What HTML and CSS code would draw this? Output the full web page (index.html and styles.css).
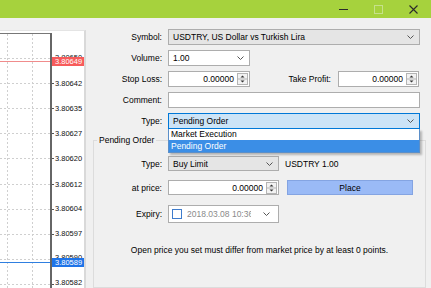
FILE: index.html
```html
<!DOCTYPE html>
<html lang="en">
<head>
  <meta charset="UTF-8" />
  <title>Order</title>
  <link rel="stylesheet" href="styles.css">
</head>
<body>
  <div class="window">
    <div class="titlebar">
      <div class="tb-btn">
        <svg width="9" height="9" viewBox="0 0 9 9"><line x1="0" y1="4.5" x2="9" y2="4.5" stroke="#2b2b2b"/></svg>
      </div>
      <div class="tb-btn">
        <svg width="9" height="9" viewBox="0 0 9 9"><rect x="0.5" y="0.5" width="8" height="8" fill="none" stroke="#c6e18a"/></svg>
      </div>
      <div class="tb-btn">
        <svg width="9" height="9" viewBox="0 0 9 9"><path d="M0.5 0.5 L8.5 8.5 M8.5 0.5 L0.5 8.5" stroke="#2b2b2b" stroke-width="1.1"/></svg>
      </div>
    </div>

    <div class="main">
      <div class="chart">
        <svg width="84" height="257" viewBox="0 0 84 257">
          <g stroke="#cfcfcf" stroke-dasharray="2 2">
            <line x1="7.5" y1="3" x2="7.5" y2="257"/>
            <line x1="32.5" y1="3" x2="32.5" y2="257"/>
            <line x1="0" y1="27.5" x2="50" y2="27.5"/>
            <line x1="0" y1="52.5" x2="50" y2="52.5"/>
            <line x1="0" y1="77.5" x2="50" y2="77.5"/>
            <line x1="0" y1="102.5" x2="50" y2="102.5"/>
            <line x1="0" y1="127.5" x2="50" y2="127.5"/>
            <line x1="0" y1="153.5" x2="50" y2="153.5"/>
            <line x1="0" y1="178.5" x2="50" y2="178.5"/>
            <line x1="0" y1="203.5" x2="50" y2="203.5"/>
            <line x1="0" y1="228.5" x2="50" y2="228.5"/>
            <line x1="0" y1="253.5" x2="50" y2="253.5"/>
          </g>
          <g stroke="#555">
            <line x1="52" y1="27.5" x2="54" y2="27.5"/>
            <line x1="52" y1="52.5" x2="54" y2="52.5"/>
            <line x1="52" y1="77.5" x2="54" y2="77.5"/>
            <line x1="52" y1="102.5" x2="54" y2="102.5"/>
            <line x1="52" y1="127.5" x2="54" y2="127.5"/>
            <line x1="52" y1="153.5" x2="54" y2="153.5"/>
            <line x1="52" y1="178.5" x2="54" y2="178.5"/>
            <line x1="52" y1="203.5" x2="54" y2="203.5"/>
            <line x1="52" y1="253.5" x2="54" y2="253.5"/>
          </g>
          <line x1="0" y1="30.5" x2="50" y2="30.5" stroke="#f08c8c"/>
          <line x1="0" y1="231.5" x2="50" y2="231.5" stroke="#2f7fe0"/>
          <line x1="0" y1="2.5" x2="51" y2="2.5" stroke="#777"/>
          <line x1="51" y1="2" x2="51" y2="257" stroke="#666" stroke-width="2"/>

          <g class="axis">
            <text x="55" y="29">3.80650</text>
            <text x="55" y="54.7">3.80642</text>
            <text x="55" y="79.7">3.80635</text>
            <text x="55" y="104.7">3.80627</text>
            <text x="55" y="129.7">3.80620</text>
            <text x="55" y="155.7">3.80612</text>
            <text x="55" y="180.2">3.80604</text>
            <text x="55" y="204.7">3.80597</text>
            <text x="55" y="229">3.80590</text>
            <text x="55" y="254.2">3.80582</text>
          </g>
          <rect x="52" y="26" width="32" height="9" fill="#f75b5b"/>
          <text class="axis-tag" x="55" y="33.2">3.80649</text>
          <rect x="52" y="227" width="32" height="9" fill="#1f74e8"/>
          <text class="axis-tag" x="55" y="234.2">3.80589</text>
        </svg>
      </div>

      <div class="form">
        <div class="row">
          <span class="lbl">Symbol:</span>
          <div class="select sel-gray w-full">
            <span>USDTRY, US Dollar vs Turkish Lira</span>
            <svg class="chev" width="7" height="4" viewBox="0 0 7 4"><path d="M0.5 0.5 L3.5 3.5 L6.5 0.5" fill="none" stroke="#555"/></svg>
          </div>
        </div>

        <div class="row">
          <span class="lbl">Volume:</span>
          <div class="select sel-white w-small">
            <span>1.00</span>
            <svg class="chev" width="7" height="4" viewBox="0 0 7 4"><path d="M0.5 0.5 L3.5 3.5 L6.5 0.5" fill="none" stroke="#555"/></svg>
          </div>
        </div>

        <div class="row">
          <span class="lbl">Stop Loss:</span>
          <div class="input w-small">
            <span class="val">0.00000</span>
            <svg class="spin" width="11" height="12" viewBox="0 0 11 12"><rect x="0.5" y="0.5" width="10" height="11" fill="#f2f2f2" stroke="#b4b4b4"/><line x1="1" y1="6" x2="10" y2="6" stroke="#b4b4b4"/><path d="M3.5 4.5 L5.5 2.5 L7.5 4.5Z" fill="#333"/><path d="M3.5 7.5 L5.5 9.5 L7.5 7.5Z" fill="#333"/></svg>
          </div>
          <span class="lbl-tp">Take Profit:</span>
          <div class="input w-tp">
            <span class="val">0.00000</span>
            <svg class="spin" width="11" height="12" viewBox="0 0 11 12"><rect x="0.5" y="0.5" width="10" height="11" fill="#f2f2f2" stroke="#b4b4b4"/><line x1="1" y1="6" x2="10" y2="6" stroke="#b4b4b4"/><path d="M3.5 4.5 L5.5 2.5 L7.5 4.5Z" fill="#333"/><path d="M3.5 7.5 L5.5 9.5 L7.5 7.5Z" fill="#333"/></svg>
          </div>
        </div>

        <div class="row">
          <span class="lbl">Comment:</span>
          <div class="input w-full"></div>
        </div>

        <div class="row last">
          <span class="lbl">Type:</span>
          <div class="type-wrap w-full">
            <div class="select sel-focus">
              <span>Pending Order</span>
              <svg class="chev" width="7" height="4" viewBox="0 0 7 4"><path d="M0.5 0.5 L3.5 3.5 L6.5 0.5" fill="none" stroke="#555"/></svg>
            </div>
            <ul class="dropdown">
              <li>Market Execution</li>
              <li class="picked">Pending Order</li>
            </ul>
          </div>
        </div>

        <fieldset class="group">
          <legend>Pending Order</legend>

          <div class="grow g1">
            <span class="glbl">Type:</span>
            <div class="select sel-gray w-mid">
              <span>Buy Limit</span>
              <svg class="chev" width="7" height="4" viewBox="0 0 7 4"><path d="M0.5 0.5 L3.5 3.5 L6.5 0.5" fill="none" stroke="#555"/></svg>
            </div>
            <span class="info">USDTRY 1.00</span>
          </div>

          <div class="grow g2">
            <span class="glbl">at price:</span>
            <div class="input w-mid">
              <span class="val">0.00000</span>
              <svg class="spin" width="11" height="12" viewBox="0 0 11 12"><rect x="0.5" y="0.5" width="10" height="11" fill="#f2f2f2" stroke="#b4b4b4"/><line x1="1" y1="6" x2="10" y2="6" stroke="#b4b4b4"/><path d="M3.5 4.5 L5.5 2.5 L7.5 4.5Z" fill="#333"/><path d="M3.5 7.5 L5.5 9.5 L7.5 7.5Z" fill="#333"/></svg>
            </div>
            <button class="place">Place</button>
          </div>

          <div class="grow g3">
            <span class="glbl">Expiry:</span>
            <div class="date w-mid">
              <span class="check"></span>
              <span class="date-text">2018.03.08 10:36</span>
              <svg class="chev chev-date" width="7" height="4" viewBox="0 0 7 4"><path d="M0.5 0.5 L3.5 3.5 L6.5 0.5" fill="none" stroke="#555"/></svg>
            </div>
          </div>

          <p class="note">Open price you set must differ from market price by at least 0 points.</p>
        </fieldset>
      </div>
    </div>
  </div>
</body>
</html>
```

FILE: styles.css
```css
:root {
  --win-bg: #f0f0f0;
  --title-green: #a6d23d;
  --border: #adadad;
  --focus: #0078d7;
  --pick: #3b8ee6;
}

body {
  margin: 0;
  font-family: "Liberation Sans", Arial, sans-serif;
  font-size: 8.5px;
  color: #000;
  background: var(--win-bg);
}

.window {
  width: 431px;
  height: 288px;
  overflow: hidden;
  display: flex;
  flex-direction: column;
}

.titlebar {
  height: 18px;
  flex: none;
  background: var(--title-green);
  display: flex;
  justify-content: flex-end;
  align-items: center;
}

.tb-btn {
  width: 35px;
  height: 18px;
  display: flex;
  align-items: center;
  justify-content: center;
}

.tb-btn svg {
  display: block;
}

.main {
  flex: 1;
  display: flex;
}

/* chart */
.chart {
  width: 84px;
  margin-top: 12px;
  background: #fff;
  border-top: 1px solid #e4e4e4;
  border-right: 2px solid #d9d9d9;
}

.chart svg {
  display: block;
}

.axis text {
  font-family: "Liberation Sans", Arial, sans-serif;
  font-size: 7.5px;
  fill: #111;
}

.axis-tag {
  font-family: "Liberation Sans", Arial, sans-serif;
  font-size: 7.5px;
  fill: #fff;
}

/* order form */
.form {
  flex: 1;
  padding-top: 11px;
}

.row {
  display: flex;
  align-items: center;
  height: 16px;
  margin-bottom: 5px;
}

.row.last {
  margin-bottom: 0;
}

.lbl {
  width: 76px;
  margin-right: 6px;
  text-align: right;
}

.lbl-tp {
  width: 81px;
  margin-right: 7px;
  text-align: right;
}

.w-full { width: 252px; }
.w-small { width: 82px; }
.w-tp { width: 81px; }
.w-mid { width: 111px; }

.select,
.input,
.date {
  box-sizing: border-box;
  height: 16px;
  border: 1px solid var(--border);
  display: flex;
  align-items: center;
}

.select {
  padding-left: 4px;
}

.sel-gray { background: #e5e5e5; }
.sel-white { background: #fff; }

.sel-focus {
  background: #cce4f7;
  border-color: var(--focus);
}

.chev {
  margin-left: auto;
  margin-right: 5px;
  flex: none;
}

.chev-date {
  margin-right: 8px;
}

.input {
  background: #fff;
  justify-content: flex-end;
}

.val {
  margin-right: 3px;
}

.spin {
  margin-right: 1px;
  flex: none;
}

.type-wrap {
  position: relative;
}

.dropdown {
  position: absolute;
  top: 100%;
  left: 0;
  right: 0;
  margin: 0;
  padding: 0;
  list-style: none;
  background: #fff;
  border: 1px solid #5b8fc9;
  border-top: none;
  box-shadow: 2px 2px 2px rgba(0, 0, 0, 0.25);
  z-index: 2;
}

.dropdown li {
  height: 11px;
  line-height: 11px;
  padding-left: 2px;
}

.dropdown li.picked {
  height: 12px;
  line-height: 12px;
  background: var(--pick);
  color: #fff;
}

/* pending order group */
.group {
  margin: 6px 0 0 7px;
  width: 333px;
  height: 153px;
  box-sizing: border-box;
  padding: 0;
  border: 1px solid #dcdcdc;
}

.group legend {
  margin-left: 3px;
  padding: 0 2px;
  line-height: 10px;
}

.grow {
  display: flex;
  align-items: center;
}

.g1 { margin-top: 11px; }
.g2 { margin-top: 9px; }
.g3 { margin-top: 10px; }

.g1 .select,
.g2 .input {
  height: 15px;
}

.glbl {
  width: 68px;
  margin-right: 6px;
  text-align: right;
}

.info {
  margin-left: 6px;
}

.place {
  margin-left: 8px;
  width: 126px;
  height: 15px;
  padding: 0;
  font-family: inherit;
  font-size: 8.5px;
  color: #000;
  background: #9abaf6;
  border: 1px solid #84a4e2;
}

.date {
  height: 18px;
  background: #fff;
}

.check {
  width: 8px;
  height: 8px;
  margin-left: 3px;
  border: 1px solid #3f7ccc;
  background: #fff;
  flex: none;
}

.date-text {
  margin-left: 5px;
  width: 64px;
  overflow: hidden;
  white-space: nowrap;
  color: #8a8a8a;
}

.note {
  margin: 22px 0 0;
  text-align: center;
  line-height: 11px;
}
```
